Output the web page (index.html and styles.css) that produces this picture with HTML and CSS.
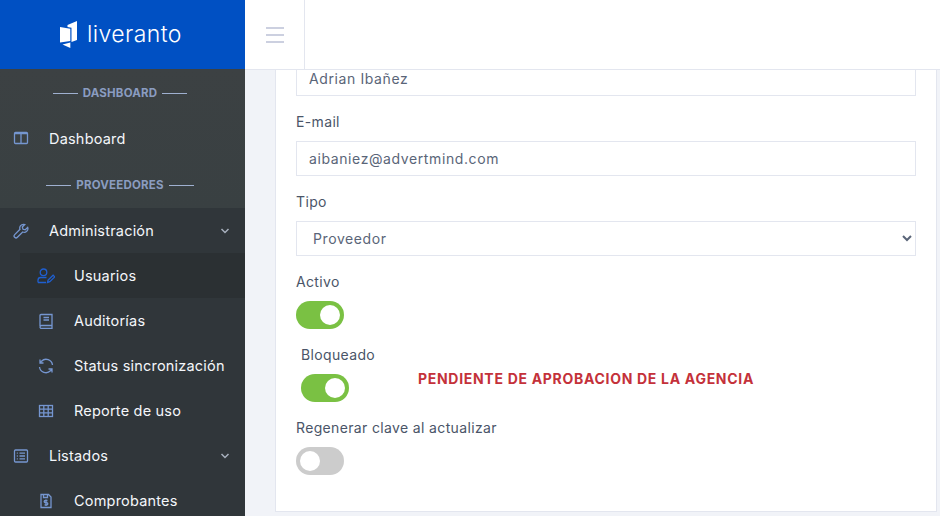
FILE: index.html
```html
<!DOCTYPE html>
<html lang="es">
<head>
<meta charset="utf-8">
<title>Liveranto</title>
<link rel="stylesheet" href="styles.css">
</head>
<body>
<div class="app">
  <aside class="sidebar">
    <div class="brand">
      <svg class="brand-icon" viewBox="0 0 17 27" width="17" height="27"><path fill="#fff" d="M7.500 4 17 0v19l-5.500 2V6.800L7.500 6z"/><path fill="#fff" d="M0 6l10.300 1.800V20L0 21.500z"/><path fill="#fff" d="M2.500 23.500 10.300 21.500V27z"/></svg>
      <span class="brand-name">liveranto</span>
    </div>
    <nav class="menu">
      <div class="menu-title"><span>DASHBOARD</span></div>
      <a class="item first"><svg class="ico" viewBox="0 0 16 16"><rect x="1.500" y="2.500" width="13" height="11" rx="1"/><path d="M8 2.500v11M1.500 3.700h13"/></svg><span>Dashboard</span></a>
      <div class="menu-title"><span>PROVEEDORES</span></div>
      <div class="group">
        <a class="item"><svg class="ico" viewBox="0 0 16 16"><path d="M10.500 1.300a3.700 3.700 0 0 0-3.500 5L1.700 11.600a1.900 1.900 0 0 0 2.700 2.700L9.700 9a3.700 3.700 0 0 0 5-4.600L12.300 6.800 10 6.300 9.300 4l2.500-2.500a3.700 3.700 0 0 0-1.300-.2z"/></svg><span>Administración</span><svg class="caret" viewBox="0 0 10 6"><path d="M1.500 1 5 4.500 8.500 1"/></svg></a>
        <a class="item sub active"><svg class="ico" viewBox="0 0 18 16"><circle cx="6.500" cy="4.300" r="3.300"/><path d="M1 14.500v-2.200a2.800 2.800 0 0 1 2.800-2.800h5.700M1 14.500h8"/><path d="M10.500 14.500l.6-2.500 5-4.800 1.700 1.700-5 4.800z"/></svg><span>Usuarios</span></a>
        <a class="item sub"><svg class="ico" viewBox="0 0 16 16"><path d="M2 13V2.500a1 1 0 0 1 1-1h11v11H3.500a1.500 1.500 0 0 0 0 3H14v-3M5.500 4.500h5.500M5.500 7h5.500"/></svg><span>Auditorías</span></a>
        <a class="item sub"><svg class="ico" viewBox="0 0 16 16"><path d="M14.500 7A6.500 6.500 0 0 0 3.500 3.200L2 5M2 1.500V5h3.500M1.500 9a6.500 6.500 0 0 0 11 3.800L14 11M14 14.500V11h-3.500"/></svg><span>Status sincronización</span></a>
        <a class="item sub"><svg class="ico" viewBox="0 0 16 16"><rect x="1.500" y="2.500" width="13" height="11"/><path d="M1.500 6.200h13M1.500 9.800h13M5.800 2.500v11M10.200 2.500v11"/></svg><span>Reporte de uso</span></a>
        <a class="item"><svg class="ico" viewBox="0 0 16 16"><rect x="1.500" y="2" width="13" height="12" rx="1"/><path d="M6.500 5.200h5.500M6.500 8h5.500M6.500 10.800h5.500M3.800 5.200h1M3.800 8h1M3.800 10.800h1"/></svg><span>Listados</span><svg class="caret" viewBox="0 0 10 6"><path d="M1.500 1 5 4.500 8.500 1"/></svg></a>
        <a class="item sub"><svg class="ico" viewBox="0 0 16 16"><path d="M3 1.500h7.500l2.500 2.500v10.500H3zM5.500 1.500v3h4v-3"/><path d="M9.500 7.500H7.300a1 1 0 0 0 0 2.200h1.400a1 1 0 0 1 0 2.200H6.500M8 6.500v6.500"/></svg><span>Comprobantes</span></a>
      </div>
    </nav>
  </aside>
  <div class="main">
    <header class="topbar">
      <button class="burger" aria-label="Menú"><i></i><i></i><i></i></button>
    </header>
    <section class="content">
      <form class="card">
        <div class="field">
          <input class="input" type="text" value="Adrian Ibañez">
        </div>
        <div class="field">
          <label class="label">E-mail</label>
          <input class="input" type="text" value="aibaniez@advertmind.com">
        </div>
        <div class="field">
          <label class="label">Tipo</label>
          <select class="input select"><option>Proveedor</option></select>
        </div>
        <div class="field">
          <label class="label">Activo</label>
          <span class="switch on"></span>
        </div>
        <div class="row">
          <div class="field locked">
            <label class="label">Bloqueado</label>
            <span class="switch on"></span>
          </div>
          <strong class="alert">PENDIENTE DE APROBACION DE LA AGENCIA</strong>
        </div>
        <div class="field">
          <label class="label">Regenerar clave al actualizar</label>
          <span class="switch"></span>
        </div>
      </form>
    </section>
  </div>
</div>
</body>
</html>
```

FILE: styles.css
```css
* { box-sizing: border-box; }
html, body { margin: 0; height: 516px; overflow: hidden; }
body { font-family: Inter, "Noto Sans", sans-serif; font-size: 14px; color: #4a5568; background: #f1f3f8; }
.app { display: flex; height: 516px; }

.sidebar { width: 245px; flex: none; display: flex; flex-direction: column; background: #30363a; overflow: hidden; }
.brand { height: 69px; flex: none; display: flex; align-items: center; gap: 10px; padding: 0 0 1px 60px; background: #0050c3; color: #fff; }
.brand-icon { flex: none; }
.brand-name { font-size: 23px; font-weight: 300; letter-spacing: .4px; }
.menu { flex: 1; background: linear-gradient(#3c4143, #394042 140px); }
.menu-title { height: 46px; padding: 2px 5px 0 0; display: flex; align-items: center; justify-content: center; gap: 5px; font-size: 11.500px; font-weight: 700; letter-spacing: .2px; color: #8a9cc0; }
.menu-title::before, .menu-title::after { content: ""; width: 25px; height: 1px; background: #9fb0d0; }
.group { background: #30363a; margin-top: 1px; }
.item { height: 45px; display: flex; align-items: center; padding-left: 13px; padding-right: 15px; color: #f4f6fa; font-size: 14.500px; letter-spacing: .2px; }
.first { height: 46px; }
.item span { flex: 1; margin-left: 20px; }
.ico { width: 16px; height: 16px; flex: none; fill: none; stroke: #7596d0; stroke-width: 1.300; }
.caret { width: 10px; height: 6px; flex: none; fill: none; stroke: #a7b0bd; stroke-width: 1.500; }
.sub { margin-left: 20px; padding-left: 18px; }
.active { background: #2b3033; }
.active .ico { stroke: #1f5fd0; width: 18px; margin-left: -1px; margin-right: -1px; }

.main { flex: 1; min-width: 0; display: flex; flex-direction: column; }
.topbar { height: 70px; flex: none; display: flex; background: #fff; border-bottom: 1px solid #e3e6ef; }
.burger { width: 60px; padding: 0 0 0 1px; border: 0; border-right: 1px solid #e3e6ef; background: none; display: flex; flex-direction: column; align-items: center; justify-content: center; gap: 5px; }
.burger i { width: 18px; height: 2px; background: #ccd0e0; }
.content { flex: 1; overflow: hidden; padding: 0 3px 0 30px; }
.card { height: 451px; margin-top: -9px; padding: 0 20px; background: #fff; border: 1px solid #e3e6ef; border-top: 0; }

.field { display: block; margin-bottom: 16px; }
.label { display: block; height: 20px; line-height: 20px; margin-bottom: 9px; font-size: 14px; letter-spacing: .35px; color: #4a5568; }
.input { display: block; width: 100%; height: 35px; padding: 0 12px; border: 1px solid #e3e6ef; background: #fff; font: inherit; font-size: 14px; letter-spacing: .6px; color: #5a6578; border-radius: 0; }
.select { padding-left: 12px; }
.switch { display: block; position: relative; width: 48px; height: 28px; border-radius: 14px; background: #ccc; }
.switch::after { content: ""; position: absolute; left: 4px; top: 4px; width: 20px; height: 20px; border-radius: 50%; background: #fff; }
.switch.on { background: #7ac143; }
.switch.on::after { left: 24px; }
.row { display: flex; align-items: flex-start; }
.locked { width: 122px; padding-left: 5px; }
.alert { margin-top: 25px; font-size: 14px; font-weight: 700; letter-spacing: .7px; color: #c4313a; white-space: nowrap; }
```
